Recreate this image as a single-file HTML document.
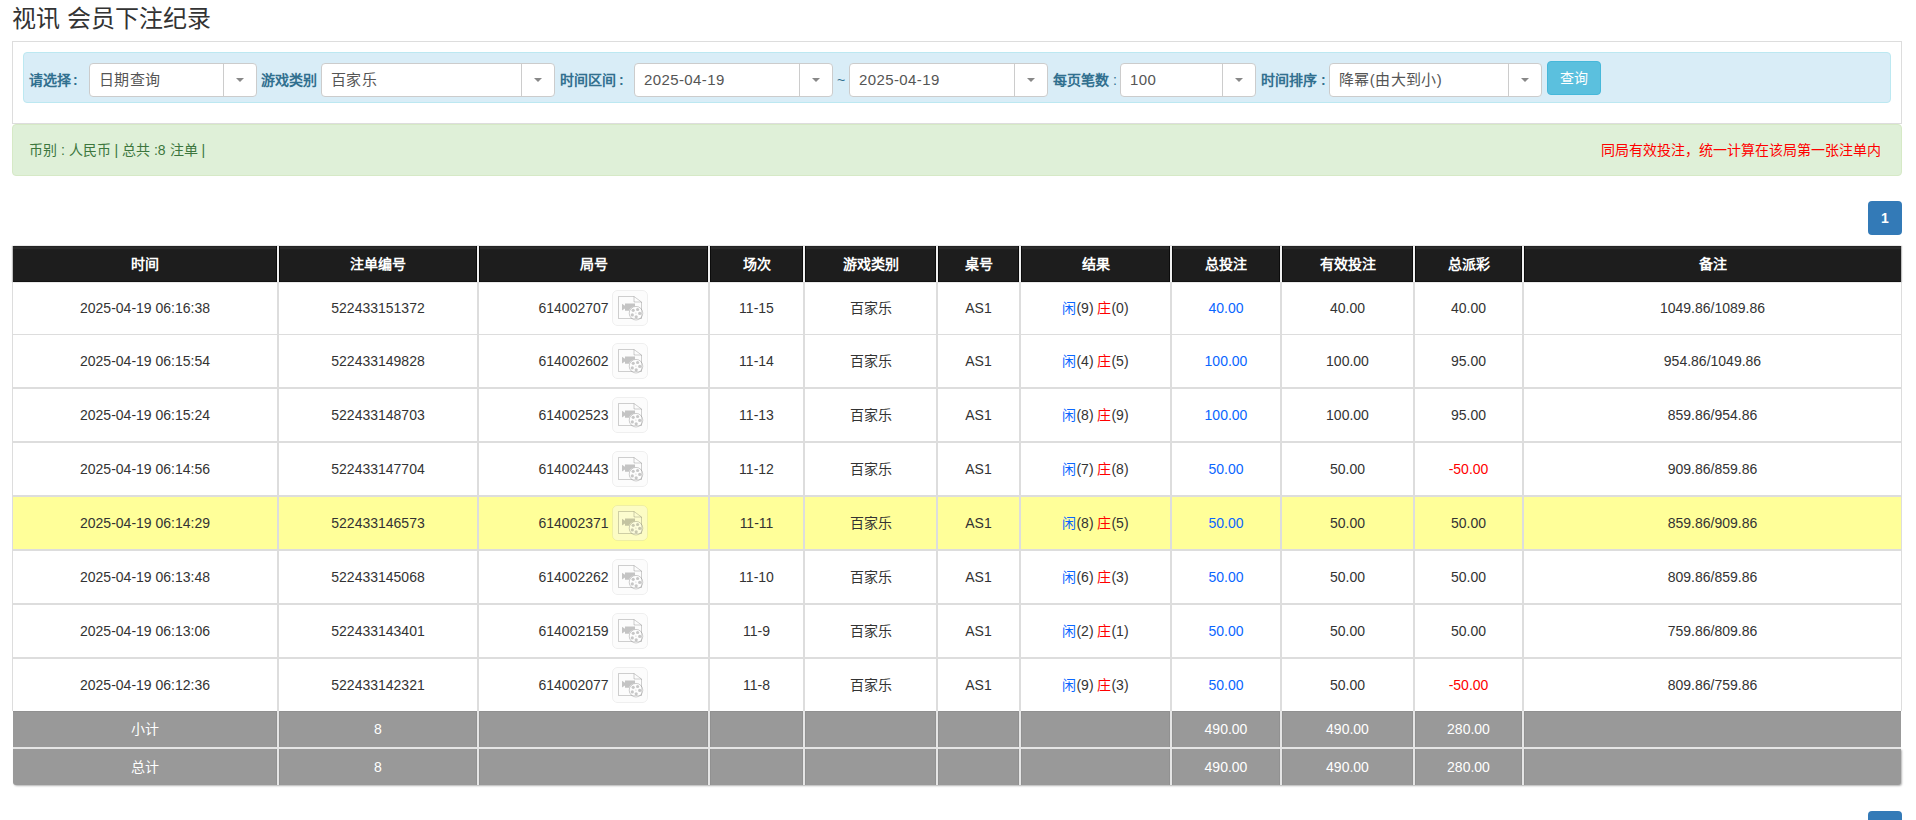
<!DOCTYPE html>
<html lang="zh-CN"><head><meta charset="utf-8">
<style>
*{box-sizing:border-box;}
html,body{margin:0;padding:0;background:#fff;}
body{font-family:"Liberation Sans",sans-serif;font-size:14px;color:#333;width:1916px;height:820px;overflow:hidden;position:relative;}
.title{position:absolute;left:12px;top:3px;font-size:24px;line-height:32px;color:#333;white-space:nowrap;}
.panel{position:absolute;left:12px;top:41px;width:1890px;height:83px;border:1px solid #ddd;background:#fff;}
.well{position:absolute;left:10px;top:10px;width:1868px;height:51px;background:#d9edf7;border:1px solid #bce8f1;border-radius:4px;}
.lbl{position:absolute;top:3px;line-height:49px;font-size:14px;font-weight:bold;color:#31708f;white-space:nowrap;}
.sel{position:absolute;top:10px;height:34px;background:#fff;border:1px solid #ccc;border-radius:4px;}
.sel .v{position:absolute;left:9px;letter-spacing:0.4px;top:0;line-height:32px;font-size:15px;color:#555;white-space:nowrap;}
.sel .btn{position:absolute;right:0;top:0;width:33px;height:32px;border-left:1px solid #ccc;}
.sel .btn:after{content:"";position:absolute;left:12px;top:14px;border-left:4px solid transparent;border-right:4px solid transparent;border-top:4px solid #888;}
.qbtn{position:absolute;top:8px;height:34px;background:#5bc0de;border:1px solid #46b8da;border-radius:4px;color:#fff;font-size:14px;line-height:32px;text-align:center;}
.alert{position:absolute;left:12px;top:124px;width:1890px;height:52px;background:#dff0d8;border:1px solid #d6e9c6;border-radius:4px;}
.alert .l{position:absolute;left:16px;top:0;line-height:50px;color:#3c763d;font-size:14px;white-space:nowrap;}
.alert .r{position:absolute;right:20px;top:0;line-height:50px;color:#f00;font-size:14px;white-space:nowrap;}
.pg{position:absolute;left:1868px;top:201px;width:34px;height:34px;background:#337ab7;border-radius:4px;color:#fff;font-size:14px;line-height:34px;text-align:center;font-weight:bold;}
.pg2{position:absolute;left:1868px;top:811px;width:34px;height:34px;background:#337ab7;border-radius:4px;}
table{position:absolute;left:12px;top:246px;border-collapse:collapse;table-layout:fixed;width:1890px;font-size:14px;}
th{background:#1c1c1c;color:#fff;font-weight:bold;height:36px;text-align:center;border:2px solid #ddd;border-top:0;padding:0;}
td{height:54px;text-align:center;border:2px solid #ddd;padding:0;color:#333;}

.tb{position:absolute;background:#fff;border-left:1px solid #ddd;border-right:1px solid #ddd;}
.hl{position:absolute;left:12px;width:1890px;height:2px;background:#ddd;}
.hd{position:absolute;left:13px;top:246px;width:1888px;height:36px;background:linear-gradient(#232323 0,#232323 1px,#2b2b2b 1px,#2b2b2b 3px,#242424 3px,#1d1d1d 4px,#1d1d1d 35px,#131313 35px);box-shadow:-1px 0 1px rgba(0,0,0,.25),1px 0 1px rgba(0,0,0,.25);}
.gr{position:absolute;left:13px;width:1888px;height:36px;background:#999;box-shadow:inset 0 1px 0 rgba(0,0,0,.06);}
.gr+.gr{border-radius:0 0 3px 3px;box-shadow:1px 1px 2px rgba(0,0,0,.3);}
.gsep{position:absolute;left:13px;top:747px;width:1888px;height:2px;background:#e5e5e5;}
.vh{position:absolute;top:246px;width:4px;height:36px;background:#0b0b0b;border-left:1px solid #0b0b0b;border-right:1px solid #0b0b0b;}
.vh:after{content:"";position:absolute;left:0;top:0;width:2px;height:36px;background:#f0f0f0;}
.vb{position:absolute;top:282px;width:2px;height:429px;background:#ddd;}
.vg{position:absolute;width:4px;height:36px;background:#e5e5e5;border-left:1px solid #919191;border-right:1px solid #919191;}
.th{position:absolute;top:246px;height:36px;line-height:36px;text-align:center;color:#fff;font-weight:bold;font-size:14px;white-space:nowrap;}
.td{position:absolute;text-align:center;color:#333;font-size:14px;white-space:nowrap;}
.tg{position:absolute;height:36px;line-height:36px;text-align:center;color:#fff;font-size:14px;white-space:nowrap;}
.ic{vertical-align:middle;position:relative;top:-1px;}
.bl{color:#0a66ff;}
.rd{color:#f00;}
</style></head><body>
<div class="title">视讯 会员下注纪录</div>
<div class="panel"><div class="well">
<span class="lbl" style="left:5px">请选择<span style="margin-left:2px">:</span></span>
<div class="sel" style="left:65px;width:168px"><span class="v">日期查询</span><span class="btn"></span></div>
<span class="lbl" style="left:237px">游戏类别</span>
<div class="sel" style="left:297px;width:234px"><span class="v">百家乐</span><span class="btn"></span></div>
<span class="lbl" style="left:536px">时间区间<span style="margin-left:3px">:</span></span>
<div class="sel" style="left:610px;width:199px"><span class="v">2025-04-19</span><span class="btn"></span></div>
<span class="lbl" style="left:813px;font-weight:normal">~</span>
<div class="sel" style="left:825px;width:199px"><span class="v">2025-04-19</span><span class="btn"></span></div>
<span class="lbl" style="left:1029px">每页笔数 <span style="font-weight:normal">:</span></span>
<div class="sel" style="left:1096px;width:136px"><span class="v">100</span><span class="btn"></span></div>
<span class="lbl" style="left:1237px">时间排序 :</span>
<div class="sel" style="left:1305px;width:213px"><span class="v">降幂(由大到小)</span><span class="btn"></span></div>
<div class="qbtn" style="left:1523px;width:54px">查询</div>
</div></div>
<div class="alert"><span class="l">币别 : 人民币 | 总共 :8 注单 |</span><span class="r">同局有效投注，统一计算在该局第一张注单内</span></div>
<div class="pg">1</div>
<div class="pg2"></div>


<!--TBL-->
<svg width="0" height="0" style="position:absolute"><defs><mask id="mk"><rect width="36" height="36" fill="#fff"/><circle cx="24" cy="23.2" r="7.3" fill="#000"/></mask><g id="vid"><rect x="0.5" y="0.5" width="35" height="35" rx="5" fill="rgba(248,248,248,0.45)" stroke="rgba(0,0,0,0.06)"/><path d="M6.5,6.5 H22 L29.5,12 V28.5 H6.5 Z" fill="rgba(255,255,255,0.2)" stroke="rgba(0,0,0,0.18)" stroke-width="1"/><path d="M22,6.5 V12 H29.5" fill="none" stroke="rgba(0,0,0,0.18)" stroke-width="1"/><path d="M10,13.8 L13,15.8 V13.5 H23 V20.8 H13 V18.5 L10,20.5 Z" fill="rgba(0,0,0,0.22)" mask="url(#mk)"/><circle cx="24" cy="23.2" r="6.8" fill="rgba(255,255,255,0.3)" stroke="rgba(0,0,0,0.19)" stroke-width="1"/><g fill="rgba(0,0,0,0.21)"><circle cx="21.2" cy="20.3" r="1.6"/><circle cx="25.6" cy="19.5" r="1.6"/><circle cx="27.7" cy="23.4" r="1.6"/><circle cx="24.2" cy="26.8" r="1.6"/><circle cx="20.3" cy="24.9" r="1.6"/><circle cx="23.9" cy="23" r="0.6"/></g></g></defs></svg>
<div class="tb" style="left:12px;top:282px;width:1890px;height:429px;"></div>
<div style="position:absolute;left:13px;top:497px;width:1888px;height:52px;background:#ffff99;"></div>
<div class="hl" style="top:334px;height:1px"></div>
<div class="hl" style="top:387px"></div>
<div class="hl" style="top:441px"></div>
<div class="hl" style="top:495px"></div>
<div class="hl" style="top:549px"></div>
<div class="hl" style="top:603px"></div>
<div class="hl" style="top:657px"></div>
<div class="hd"></div>
<div class="gr" style="top:711px"></div><div class="gr" style="top:749px"></div>
<div class="gsep"></div>
<div class="vh" style="left:276px"></div><div class="vb" style="left:277px"></div><div class="vg" style="left:276px;top:711px"></div><div class="vg" style="left:276px;top:749px"></div>
<div class="vh" style="left:476px"></div><div class="vb" style="left:477px"></div><div class="vg" style="left:476px;top:711px"></div><div class="vg" style="left:476px;top:749px"></div>
<div class="vh" style="left:707px"></div><div class="vb" style="left:708px"></div><div class="vg" style="left:707px;top:711px"></div><div class="vg" style="left:707px;top:749px"></div>
<div class="vh" style="left:802px"></div><div class="vb" style="left:803px"></div><div class="vg" style="left:802px;top:711px"></div><div class="vg" style="left:802px;top:749px"></div>
<div class="vh" style="left:935px"></div><div class="vb" style="left:936px"></div><div class="vg" style="left:935px;top:711px"></div><div class="vg" style="left:935px;top:749px"></div>
<div class="vh" style="left:1018px"></div><div class="vb" style="left:1019px"></div><div class="vg" style="left:1018px;top:711px"></div><div class="vg" style="left:1018px;top:749px"></div>
<div class="vh" style="left:1169px"></div><div class="vb" style="left:1170px"></div><div class="vg" style="left:1169px;top:711px"></div><div class="vg" style="left:1169px;top:749px"></div>
<div class="vh" style="left:1279px"></div><div class="vb" style="left:1280px"></div><div class="vg" style="left:1279px;top:711px"></div><div class="vg" style="left:1279px;top:749px"></div>
<div class="vh" style="left:1412px"></div><div class="vb" style="left:1413px"></div><div class="vg" style="left:1412px;top:711px"></div><div class="vg" style="left:1412px;top:749px"></div>
<div class="vh" style="left:1521px"></div><div class="vb" style="left:1522px"></div><div class="vg" style="left:1521px;top:711px"></div><div class="vg" style="left:1521px;top:749px"></div>
<div class="th" style="left:13px;width:264px">时间</div>
<div class="th" style="left:279px;width:198px">注单编号</div>
<div class="th" style="left:479px;width:229px">局号</div>
<div class="th" style="left:710px;width:93px">场次</div>
<div class="th" style="left:805px;width:131px">游戏类别</div>
<div class="th" style="left:938px;width:81px">桌号</div>
<div class="th" style="left:1021px;width:149px">结果</div>
<div class="th" style="left:1172px;width:108px">总投注</div>
<div class="th" style="left:1282px;width:131px">有效投注</div>
<div class="th" style="left:1415px;width:107px">总派彩</div>
<div class="th" style="left:1524px;width:377px">备注</div>
<div class="td" style="left:13px;width:264px;top:282px;height:52px;line-height:52px">2025-04-19 06:16:38</div>
<div class="td" style="left:279px;width:198px;top:282px;height:52px;line-height:52px">522433151372</div>
<div class="td" style="left:479px;width:229px;top:282px;height:52px;line-height:52px">614002707 <svg class="ic" width="36" height="36" viewBox="0 0 36 36"><use href="#vid"/></svg></div>
<div class="td" style="left:710px;width:93px;top:282px;height:52px;line-height:52px">11-15</div>
<div class="td" style="left:805px;width:131px;top:282px;height:52px;line-height:52px">百家乐</div>
<div class="td" style="left:938px;width:81px;top:282px;height:52px;line-height:52px">AS1</div>
<div class="td" style="left:1021px;width:149px;top:282px;height:52px;line-height:52px"><span class="bl">闲</span>(9) <span class="rd">庄</span>(0)</div>
<div class="td" style="left:1172px;width:108px;top:282px;height:52px;line-height:52px"><span class="bl">40.00</span></div>
<div class="td" style="left:1282px;width:131px;top:282px;height:52px;line-height:52px">40.00</div>
<div class="td" style="left:1415px;width:107px;top:282px;height:52px;line-height:52px">40.00</div>
<div class="td" style="left:1524px;width:377px;top:282px;height:52px;line-height:52px">1049.86/1089.86</div>
<div class="td" style="left:13px;width:264px;top:335px;height:52px;line-height:52px">2025-04-19 06:15:54</div>
<div class="td" style="left:279px;width:198px;top:335px;height:52px;line-height:52px">522433149828</div>
<div class="td" style="left:479px;width:229px;top:335px;height:52px;line-height:52px">614002602 <svg class="ic" width="36" height="36" viewBox="0 0 36 36"><use href="#vid"/></svg></div>
<div class="td" style="left:710px;width:93px;top:335px;height:52px;line-height:52px">11-14</div>
<div class="td" style="left:805px;width:131px;top:335px;height:52px;line-height:52px">百家乐</div>
<div class="td" style="left:938px;width:81px;top:335px;height:52px;line-height:52px">AS1</div>
<div class="td" style="left:1021px;width:149px;top:335px;height:52px;line-height:52px"><span class="bl">闲</span>(4) <span class="rd">庄</span>(5)</div>
<div class="td" style="left:1172px;width:108px;top:335px;height:52px;line-height:52px"><span class="bl">100.00</span></div>
<div class="td" style="left:1282px;width:131px;top:335px;height:52px;line-height:52px">100.00</div>
<div class="td" style="left:1415px;width:107px;top:335px;height:52px;line-height:52px">95.00</div>
<div class="td" style="left:1524px;width:377px;top:335px;height:52px;line-height:52px">954.86/1049.86</div>
<div class="td" style="left:13px;width:264px;top:389px;height:52px;line-height:52px">2025-04-19 06:15:24</div>
<div class="td" style="left:279px;width:198px;top:389px;height:52px;line-height:52px">522433148703</div>
<div class="td" style="left:479px;width:229px;top:389px;height:52px;line-height:52px">614002523 <svg class="ic" width="36" height="36" viewBox="0 0 36 36"><use href="#vid"/></svg></div>
<div class="td" style="left:710px;width:93px;top:389px;height:52px;line-height:52px">11-13</div>
<div class="td" style="left:805px;width:131px;top:389px;height:52px;line-height:52px">百家乐</div>
<div class="td" style="left:938px;width:81px;top:389px;height:52px;line-height:52px">AS1</div>
<div class="td" style="left:1021px;width:149px;top:389px;height:52px;line-height:52px"><span class="bl">闲</span>(8) <span class="rd">庄</span>(9)</div>
<div class="td" style="left:1172px;width:108px;top:389px;height:52px;line-height:52px"><span class="bl">100.00</span></div>
<div class="td" style="left:1282px;width:131px;top:389px;height:52px;line-height:52px">100.00</div>
<div class="td" style="left:1415px;width:107px;top:389px;height:52px;line-height:52px">95.00</div>
<div class="td" style="left:1524px;width:377px;top:389px;height:52px;line-height:52px">859.86/954.86</div>
<div class="td" style="left:13px;width:264px;top:443px;height:52px;line-height:52px">2025-04-19 06:14:56</div>
<div class="td" style="left:279px;width:198px;top:443px;height:52px;line-height:52px">522433147704</div>
<div class="td" style="left:479px;width:229px;top:443px;height:52px;line-height:52px">614002443 <svg class="ic" width="36" height="36" viewBox="0 0 36 36"><use href="#vid"/></svg></div>
<div class="td" style="left:710px;width:93px;top:443px;height:52px;line-height:52px">11-12</div>
<div class="td" style="left:805px;width:131px;top:443px;height:52px;line-height:52px">百家乐</div>
<div class="td" style="left:938px;width:81px;top:443px;height:52px;line-height:52px">AS1</div>
<div class="td" style="left:1021px;width:149px;top:443px;height:52px;line-height:52px"><span class="bl">闲</span>(7) <span class="rd">庄</span>(8)</div>
<div class="td" style="left:1172px;width:108px;top:443px;height:52px;line-height:52px"><span class="bl">50.00</span></div>
<div class="td" style="left:1282px;width:131px;top:443px;height:52px;line-height:52px">50.00</div>
<div class="td" style="left:1415px;width:107px;top:443px;height:52px;line-height:52px"><span class="rd">-50.00</span></div>
<div class="td" style="left:1524px;width:377px;top:443px;height:52px;line-height:52px">909.86/859.86</div>
<div class="td" style="left:13px;width:264px;top:497px;height:52px;line-height:52px">2025-04-19 06:14:29</div>
<div class="td" style="left:279px;width:198px;top:497px;height:52px;line-height:52px">522433146573</div>
<div class="td" style="left:479px;width:229px;top:497px;height:52px;line-height:52px">614002371 <svg class="ic" width="36" height="36" viewBox="0 0 36 36"><use href="#vid"/></svg></div>
<div class="td" style="left:710px;width:93px;top:497px;height:52px;line-height:52px">11-11</div>
<div class="td" style="left:805px;width:131px;top:497px;height:52px;line-height:52px">百家乐</div>
<div class="td" style="left:938px;width:81px;top:497px;height:52px;line-height:52px">AS1</div>
<div class="td" style="left:1021px;width:149px;top:497px;height:52px;line-height:52px"><span class="bl">闲</span>(8) <span class="rd">庄</span>(5)</div>
<div class="td" style="left:1172px;width:108px;top:497px;height:52px;line-height:52px"><span class="bl">50.00</span></div>
<div class="td" style="left:1282px;width:131px;top:497px;height:52px;line-height:52px">50.00</div>
<div class="td" style="left:1415px;width:107px;top:497px;height:52px;line-height:52px">50.00</div>
<div class="td" style="left:1524px;width:377px;top:497px;height:52px;line-height:52px">859.86/909.86</div>
<div class="td" style="left:13px;width:264px;top:551px;height:52px;line-height:52px">2025-04-19 06:13:48</div>
<div class="td" style="left:279px;width:198px;top:551px;height:52px;line-height:52px">522433145068</div>
<div class="td" style="left:479px;width:229px;top:551px;height:52px;line-height:52px">614002262 <svg class="ic" width="36" height="36" viewBox="0 0 36 36"><use href="#vid"/></svg></div>
<div class="td" style="left:710px;width:93px;top:551px;height:52px;line-height:52px">11-10</div>
<div class="td" style="left:805px;width:131px;top:551px;height:52px;line-height:52px">百家乐</div>
<div class="td" style="left:938px;width:81px;top:551px;height:52px;line-height:52px">AS1</div>
<div class="td" style="left:1021px;width:149px;top:551px;height:52px;line-height:52px"><span class="bl">闲</span>(6) <span class="rd">庄</span>(3)</div>
<div class="td" style="left:1172px;width:108px;top:551px;height:52px;line-height:52px"><span class="bl">50.00</span></div>
<div class="td" style="left:1282px;width:131px;top:551px;height:52px;line-height:52px">50.00</div>
<div class="td" style="left:1415px;width:107px;top:551px;height:52px;line-height:52px">50.00</div>
<div class="td" style="left:1524px;width:377px;top:551px;height:52px;line-height:52px">809.86/859.86</div>
<div class="td" style="left:13px;width:264px;top:605px;height:52px;line-height:52px">2025-04-19 06:13:06</div>
<div class="td" style="left:279px;width:198px;top:605px;height:52px;line-height:52px">522433143401</div>
<div class="td" style="left:479px;width:229px;top:605px;height:52px;line-height:52px">614002159 <svg class="ic" width="36" height="36" viewBox="0 0 36 36"><use href="#vid"/></svg></div>
<div class="td" style="left:710px;width:93px;top:605px;height:52px;line-height:52px">11-9</div>
<div class="td" style="left:805px;width:131px;top:605px;height:52px;line-height:52px">百家乐</div>
<div class="td" style="left:938px;width:81px;top:605px;height:52px;line-height:52px">AS1</div>
<div class="td" style="left:1021px;width:149px;top:605px;height:52px;line-height:52px"><span class="bl">闲</span>(2) <span class="rd">庄</span>(1)</div>
<div class="td" style="left:1172px;width:108px;top:605px;height:52px;line-height:52px"><span class="bl">50.00</span></div>
<div class="td" style="left:1282px;width:131px;top:605px;height:52px;line-height:52px">50.00</div>
<div class="td" style="left:1415px;width:107px;top:605px;height:52px;line-height:52px">50.00</div>
<div class="td" style="left:1524px;width:377px;top:605px;height:52px;line-height:52px">759.86/809.86</div>
<div class="td" style="left:13px;width:264px;top:659px;height:52px;line-height:52px">2025-04-19 06:12:36</div>
<div class="td" style="left:279px;width:198px;top:659px;height:52px;line-height:52px">522433142321</div>
<div class="td" style="left:479px;width:229px;top:659px;height:52px;line-height:52px">614002077 <svg class="ic" width="36" height="36" viewBox="0 0 36 36"><use href="#vid"/></svg></div>
<div class="td" style="left:710px;width:93px;top:659px;height:52px;line-height:52px">11-8</div>
<div class="td" style="left:805px;width:131px;top:659px;height:52px;line-height:52px">百家乐</div>
<div class="td" style="left:938px;width:81px;top:659px;height:52px;line-height:52px">AS1</div>
<div class="td" style="left:1021px;width:149px;top:659px;height:52px;line-height:52px"><span class="bl">闲</span>(9) <span class="rd">庄</span>(3)</div>
<div class="td" style="left:1172px;width:108px;top:659px;height:52px;line-height:52px"><span class="bl">50.00</span></div>
<div class="td" style="left:1282px;width:131px;top:659px;height:52px;line-height:52px">50.00</div>
<div class="td" style="left:1415px;width:107px;top:659px;height:52px;line-height:52px"><span class="rd">-50.00</span></div>
<div class="td" style="left:1524px;width:377px;top:659px;height:52px;line-height:52px">809.86/759.86</div>
<div class="tg" style="left:13px;width:264px;top:711px">小计</div>
<div class="tg" style="left:279px;width:198px;top:711px">8</div>
<div class="tg" style="left:1172px;width:108px;top:711px">490.00</div>
<div class="tg" style="left:1282px;width:131px;top:711px">490.00</div>
<div class="tg" style="left:1415px;width:107px;top:711px">280.00</div>
<div class="tg" style="left:13px;width:264px;top:749px">总计</div>
<div class="tg" style="left:279px;width:198px;top:749px">8</div>
<div class="tg" style="left:1172px;width:108px;top:749px">490.00</div>
<div class="tg" style="left:1282px;width:131px;top:749px">490.00</div>
<div class="tg" style="left:1415px;width:107px;top:749px">280.00</div>
<!--/TBL-->
</body></html>
